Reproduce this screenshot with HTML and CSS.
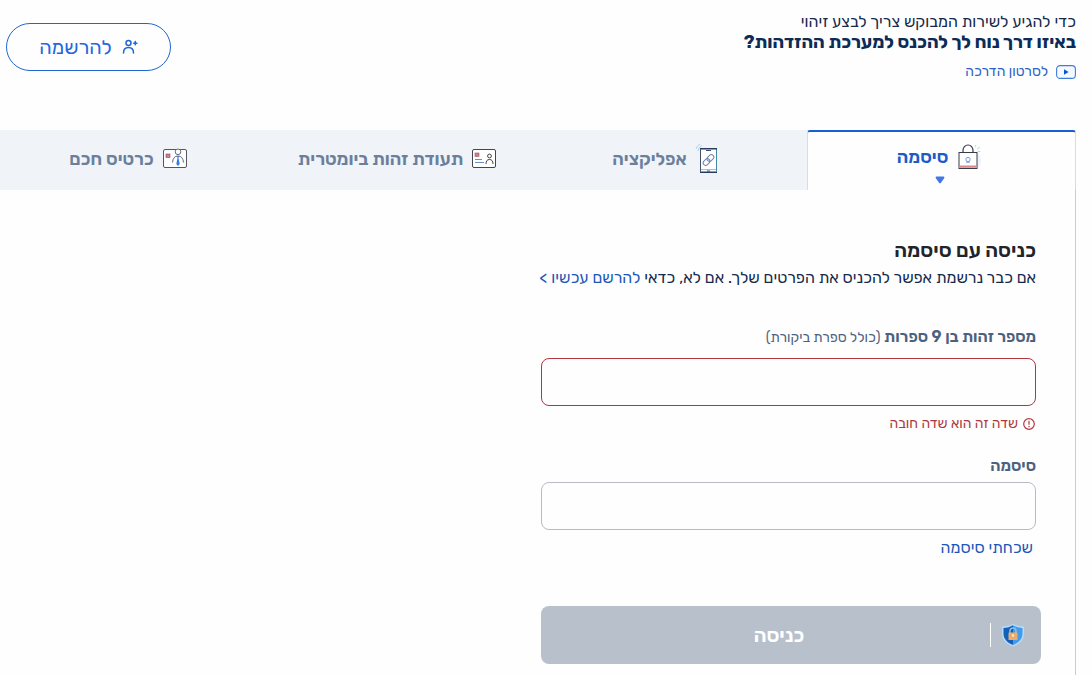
FILE: index.html
```html
<!DOCTYPE html>
<html lang="he" dir="rtl">
<head>
    <meta charset="UTF-8">
    <meta name="viewport" content="width=device-width, initial-scale=1.0">
    <title>מערכת ההזדהות</title>
    <link rel="stylesheet" href="styles.css">
</head>
<body>
    <!-- Page header -->
    <header class="header">
        <div class="intro">
            <p class="intro-text">כדי להגיע לשירות המבוקש צריך לבצע זיהוי</p>
            <h1 class="intro-title">באיזו דרך נוח לך להכנס למערכת ההזדהות?</h1>
            <a class="video-link" href="#">
                <svg class="video-icon" viewBox="0 0 20 14" aria-hidden="true">
                    <rect x="0.6" y="0.6" width="18.8" height="12.8" rx="3.5" fill="#f4f9ff" stroke="#3f7bdc" stroke-width="1.1"/>
                    <path d="M8 4.2v5.6L12.6 7z" fill="#0b56d0"/>
                </svg>
                לסרטון הדרכה
            </a>
        </div>
        <a class="register" href="#">
            <svg class="register-icon" viewBox="0 0 16 16" fill="none" stroke="#1f66d6" stroke-width="1.5" stroke-linecap="round" aria-hidden="true">
                <circle cx="6.5" cy="4" r="2.5"/>
                <path d="M1.5 14c0-3.400 2-5.400 5-5.400s5 2 5 5.400"/>
                <path d="M13.300 2.600v3.200M11.700 4.200h3.200"/>
            </svg>
            להרשמה
        </a>
    </header>

    <!-- Login methods -->
    <nav class="tabs" role="tablist">
        <button class="tab tab-active" type="button" role="tab" aria-selected="true">
            <span class="tab-label">
                <svg class="tab-icon" viewBox="0 0 26 28" aria-hidden="true">
                    <ellipse cx="19" cy="18" rx="6" ry="8" fill="#eef2fb"/>
                    <path d="M7 10V7.500a5 5.500 0 0 1 10 0V10" fill="none" stroke="#3a3d46" stroke-width="1.2"/>
                    <rect x="3" y="9.500" width="18" height="16" fill="#fff" stroke="#3a3d46"/>
                    <path d="M3.500 23h17v2h-17z" fill="#ef9a9f"/>
                    <path d="M3.500 23h17" stroke="#b8616a" stroke-width=".7"/>
                    <circle cx="12" cy="16.500" r="2.200" fill="#f2f7ff" stroke="#7ba0de"/>
                    <path d="M10 19.200h4" stroke="#7ba0de"/>
                    <path d="M19 4l1-2M21 6l3-2M21.500 8.500h3" stroke="#a9d8e8" stroke-width=".9"/>
                </svg>
                סיסמה
            </span>
            <svg class="tab-arrow" viewBox="0 0 10 8" aria-hidden="true">
                <path d="M1.500.500h7q1.300 0 .8 1.500L6 6.700q-1 1-2 0L.7 2Q.2.500 1.500.500z" fill="#3f77e8"/>
            </svg>
        </button>
        <button class="tab" type="button" role="tab" aria-selected="false">
            <span class="tab-label">
                <svg class="tab-icon" viewBox="0 0 26 32" aria-hidden="true">
                    <path d="M3 8a7 7 0 0 1 4-5.500M1 6a8 8 0 0 1 4-5" fill="none" stroke="#a5d3ec"/>
                    <rect x="5.500" y="5.500" width="16" height="24" rx="1" fill="#fff" stroke="#435069"/>
                    <path d="M5 5h17v1.500H5zM5 28.500h17V30H5z" fill="#263d60"/>
                    <path d="M11 7.500h5" stroke="#435069"/>
                    <path d="M6 26.500h15" stroke="#9aa9bd" stroke-width=".8"/>
                    <path d="M12 28h3" stroke="#435069"/>
                    <path d="M21.500 7v22" stroke="#4389a5"/>
                    <g fill="none" stroke="#7186ad" transform="rotate(-45 13.500 17)">
                        <rect x="7" y="14.500" width="7.500" height="5" rx="2.500"/>
                        <rect x="12.500" y="14.500" width="7.500" height="5" rx="2.500"/>
                    </g>
                </svg>
                אפליקציה
            </span>
        </button>
        <button class="tab" type="button" role="tab" aria-selected="false">
            <span class="tab-label">
                <svg class="tab-icon" viewBox="0 0 26 22" aria-hidden="true">
                    <rect x="1.500" y="1.500" width="23" height="18" rx="1.500" fill="#fff" stroke="#44464d"/>
                    <rect x="4" y="5" width="4" height="3.500" fill="#cf8090" stroke="#9d4f60" stroke-width=".6"/>
                    <path d="M4 11.500h7M4 14.500h9" stroke="#6290ca"/>
                    <circle cx="18.500" cy="8" r="1.900" fill="none" stroke="#42444b"/>
                    <path d="M15 16q0-4.500 3.500-4.500T22 16" fill="none" stroke="#42444b"/>
                </svg>
                תעודת זהות ביומטרית
            </span>
        </button>
        <button class="tab" type="button" role="tab" aria-selected="false">
            <span class="tab-label">
                <svg class="tab-icon" viewBox="0 0 26 22" aria-hidden="true">
                    <rect x="1.500" y="1.500" width="23" height="18" rx="1.500" fill="#fff" stroke="#55575e"/>
                    <rect x="4" y="6" width="4" height="3.500" fill="#cf8090" stroke="#7d4960" stroke-width=".6"/>
                    <circle cx="16" cy="3.800" r="2.800" fill="#fff" stroke="#686a70"/>
                    <path d="M10.500 14.500q.5-6.500 5.500-6.500t5.500 6.500" fill="none" stroke="#686a70"/>
                    <path d="M15 8h2l-.5 2 1.200 6-1.700 2-1.700-2 1.200-6z" fill="#347fe6"/>
                </svg>
                כרטיס חכם
            </span>
        </button>
    </nav>

    <!-- Password login -->
    <main class="panel">
        <h2 class="panel-title">כניסה עם סיסמה</h2>
        <p class="panel-text">אם כבר נרשמת אפשר להכניס את הפרטים שלך. אם לא, כדאי <a href="#">להרשם עכשיו &gt;</a></p>

        <form class="form">
            <div class="field">
                <label class="label" for="idNumber">מספר זהות בן 9 ספרות <span class="label-note">(כולל ספרת ביקורת)</span></label>
                <input class="input input-error" type="text" id="idNumber" aria-invalid="true" aria-describedby="idError">
                <p class="error" id="idError">
                    <svg class="error-icon" viewBox="0 0 14 14" aria-hidden="true">
                        <circle cx="7" cy="7" r="5.300" fill="none" stroke="#b5393f" stroke-width="1.200"/>
                        <path d="M7 3.800v4M7 9v1.300" stroke="#b5393f" stroke-width="1.200"/>
                    </svg>
                    שדה זה הוא שדה חובה
                </p>
            </div>

            <div class="field field-password">
                <label class="label" for="password">סיסמה</label>
                <input class="input" type="password" id="password">
                <a class="forgot" href="#">שכחתי סיסמה</a>
            </div>

            <button class="submit" type="submit">
                <span class="submit-icon">
                    <svg viewBox="0 0 24 24" aria-hidden="true">
                        <path d="M12 .8c3 2 6.500 2.600 11 2.700v7c0 6-4 10.500-11 13C5 21 1 16.500 1 10.500v-7c4.500-.1 8-.7 11-2.700z" fill="#b5dcf9"/>
                        <path d="M12 2.300C9.300 4 6.200 4.800 2.500 5v5.500c0 5.300 3.500 9.200 9.500 11.400z" fill="#1260b9"/>
                        <path d="M12 2.300c2.700 1.700 5.800 2.500 9.500 2.700v5.500c0 5.300-3.500 9.200-9.500 11.400z" fill="#429ceb"/>
                        <path d="M9 10V8a3 3 0 0 1 6 0v2" fill="none" stroke="#8cbce8" stroke-width="1.500"/>
                        <rect x="7.500" y="9.500" width="9" height="7.500" rx=".6" fill="#efac68"/>
                        <path d="M12 12v1" stroke="#fff" stroke-width="1.600" stroke-linecap="round"/>
                    </svg>
                </span>
                <span class="submit-text">כניסה</span>
            </button>
        </form>
    </main>
</body>
</html>
```
FILE: styles.css
```css
* {
    margin: 0;
    padding: 0;
    box-sizing: border-box;
}

body {
    font-family: Rubik, 'Open Sans', 'Liberation Sans', sans-serif;
    font-size: 16px;
    line-height: 20px;
    color: #14294b;
    background: #fefefe;
    padding-right: 16px;
}

a {
    color: #1c56b8;
    text-decoration: none;
}

button,
input {
    font: inherit;
}

.header {
    display: flex;
    justify-content: space-between;
    align-items: flex-start;
    height: 130px;
    padding: 12px 0 0 6px;
}

.intro-title {
    font-size: 18px;
    line-height: 20px;
    font-weight: 700;
    color: #0c2c57;
}

.video-link {
    display: flex;
    align-items: center;
    gap: 8px;
    margin-top: 10px;
    font-size: 14px;
    color: #2b62c4;
}

.video-icon {
    width: 20px;
    height: 14px;
}

.register {
    display: flex;
    align-items: center;
    justify-content: center;
    gap: 10px;
    width: 165px;
    height: 48px;
    margin-top: 11px;
    border: 1px solid #1f66d0;
    border-radius: 24px;
    font-size: 20px;
    color: #2468df;
}

.register-icon {
    width: 16px;
    height: 16px;
}

.tabs {
    display: grid;
    grid-template-columns: repeat(4, 1fr);
    height: 60px;
    background: #f0f3f8;
}

.tab {
    display: flex;
    flex-direction: column;
    align-items: center;
    justify-content: center;
    padding: 0 12px 2px 0;
    border: none;
    background: none;
    font-size: 18px;
    font-weight: 600;
    color: #6b7f9c;
    cursor: pointer;
}

.tab-active {
    gap: 5px;
    padding: 4px 4px 0 0;
    background: #fefefe;
    border: 1px solid #d5dce8;
    border-top: 2px solid #1660d2;
    border-bottom: none;
    border-radius: 3px 3px 0 0;
    color: #1c5bc8;
}

.tab-label {
    display: flex;
    align-items: center;
    gap: 8px;
}

.tab-icon {
    width: 26px;
}

.tab-arrow {
    width: 10px;
    height: 8px;
}

.panel {
    min-height: calc(100vh - 190px);
    padding: 48px 39px 11px 0;
    border-right: 1px solid #c3cddd;
}

.panel-title {
    font-size: 20px;
    line-height: 24px;
    font-weight: 600;
    color: #212529;
}

.panel-text {
    margin-top: 6px;
}

.form {
    display: flex;
    flex-direction: column;
    gap: 22px;
    max-width: 495px;
    margin-top: 39px;
}

.field {
    display: flex;
    flex-direction: column;
}

.label {
    margin-bottom: 10px;
    font-weight: 600;
    color: #4c6180;
}

.field-password .label {
    margin-bottom: 6px;
}

.label-note {
    font-size: 14px;
    font-weight: 400;
}

.input {
    width: 100%;
    height: 48px;
    padding: 0 12px;
    border: 1px solid #b8bcc2;
    border-radius: 8px;
    background: #fefefe;
}

.input-error {
    border-color: #b0373e;
}

.error {
    display: flex;
    align-items: center;
    gap: 4px;
    margin-top: 8px;
    font-size: 14px;
    color: #ab3a40;
}

.error-icon {
    width: 14px;
    height: 14px;
}

.forgot {
    align-self: flex-start;
    margin: 8px 3px 0;
}

.submit {
    display: flex;
    align-items: center;
    height: 58px;
    margin: 26px -5px 0 0;
    border: none;
    border-radius: 8px;
    background: #b8c0cc;
    color: #fff;
    font-size: 20px;
    font-weight: 600;
}

.submit-icon {
    padding: 0 16px 0 10px;
    border-left: 1px solid #fff;
    height: 24px;
}

.submit-icon svg {
    width: 24px;
    height: 24px;
}

.submit-text {
    flex: 1;
    padding-left: 27px;
    text-align: center;
}
```
